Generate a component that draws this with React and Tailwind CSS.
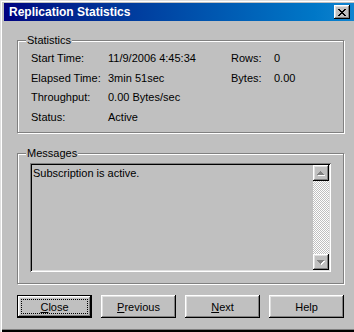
const raised =
  "shadow-[inset_-1px_-1px_0_#000,inset_1px_1px_0_#fff,inset_-2px_-2px_0_#808080,inset_2px_2px_0_#dfdfdf]";

function GroupBox({ label, className, children }) {
  return (
    <div
      className={`relative border border-[#808080] shadow-[inset_1px_1px_0_#fff,1px_1px_0_#fff] ${className}`}
    >
      <span className="absolute left-[8px] top-[-8px] bg-[#c0c0c0] px-[1px] leading-[14px]">
        {label}
      </span>
      {children}
    </div>
  );
}

function Arrow({ down }) {
  const rows = down ? [7, 5, 3, 1] : [1, 3, 5, 7];
  return (
    <svg width="8" height="5" viewBox="0 0 8 5" shapeRendering="crispEdges">
      {rows.map((w, i) => (
        <rect key={"w" + i} x={(7 - w) / 2 + 1} y={i + 1} width={w} height="1" fill="#fff" />
      ))}
      {rows.map((w, i) => (
        <rect key={"g" + i} x={(7 - w) / 2} y={i} width={w} height="1" fill="#808080" />
      ))}
    </svg>
  );
}

function ScrollButton({ down }) {
  return (
    <div className={`h-[16px] w-[16px] bg-[#c0c0c0] flex items-center justify-center ${raised}`}>
      <Arrow down={down} />
    </div>
  );
}

function Button({ children, isDefault }) {
  if (isDefault) {
    return (
      <div className="w-[75px] h-[23px] border border-black">
        <div className={`h-full w-full bg-[#c0c0c0] flex items-center justify-center p-[3px] ${raised}`}>
          <div className="h-full w-full border border-dotted border-black flex items-center justify-center">
            {children}
          </div>
        </div>
      </div>
    );
  }
  return (
    <div className={`w-[75px] h-[23px] bg-[#c0c0c0] flex items-center justify-center ${raised}`}>
      {children}
    </div>
  );
}

const stats = [
  ["Start Time:", "11/9/2006 4:45:34", "Rows:", "0"],
  ["Elapsed Time:", "3min 51sec", "Bytes:", "0.00"],
  ["Throughput:", "0.00 Bytes/sec", "", ""],
  ["Status:", "Active", "", ""],
];

export default function App() {
  return (
    <div
      className="w-[354px] h-[332px] bg-[#c0c0c0] overflow-hidden pl-[4px] pt-[3px] text-[11px] leading-[14px] text-black font-['Liberation_Sans',Arial,sans-serif] shadow-[inset_1px_1px_0_#dfdfdf,inset_2px_2px_0_#fff,inset_0_-1px_0_#000,inset_0_-2px_0_#000,inset_0_-3px_0_#808080] flex flex-col"
    >
      {/* Title bar */}
      <div className="h-[18px] flex items-center justify-between bg-gradient-to-r from-[#000080] to-[#1084d0] pl-[5px] pr-[4px]">
        <span className="text-white font-bold text-[12px]">Replication Statistics</span>
        <div className={`w-[16px] h-[14px] bg-[#c0c0c0] flex items-center justify-center ${raised}`}>
          <svg width="8" height="7" viewBox="0 0 8 7" shapeRendering="crispEdges">
            <path d="M0 0h2v1h-2zM6 0h2v1h-2zM1 1h2v1h-2zM5 1h2v1h-2zM2 2h4v1h-4zM3 3h2v1h-2zM2 4h4v1h-4zM1 5h2v1h-2zM5 5h2v1h-2zM0 6h2v1h-2zM6 6h2v1h-2z" fill="#000" />
          </svg>
        </div>
      </div>

      <div className="pl-[13px] flex flex-col">
        {/* Statistics */}
        <GroupBox label="Statistics" className="mt-[19px] w-[327px] h-[93px]">
          <div className="pl-[13px] pt-[10px] grid grid-cols-[77px_123px_43px_1fr] auto-rows-[19.7px]">
            {stats.map((r, i) => (
              <div key={i} className="contents">
                <span>{r[0]}</span>
                <span>{r[1]}</span>
                <span>{r[2]}</span>
                <span>{r[3]}</span>
              </div>
            ))}
          </div>
        </GroupBox>

        {/* Messages */}
        <GroupBox label="Messages" className="mt-[20px] w-[327px] h-[131px]">
          <div className="ml-[12px] mt-[9px] w-[301px] h-[109px] p-[2px] flex shadow-[inset_1px_1px_0_#808080,inset_-1px_-1px_0_#fff,inset_2px_2px_0_#000,inset_-2px_-2px_0_#dfdfdf]">
            <div className="flex-1 pl-[1px] pt-[1px]">Subscription is active.</div>
            <div className="w-[16px] flex flex-col">
              <ScrollButton />
              <div className="flex-1 bg-[repeating-conic-gradient(#fff_0_25%,#c0c0c0_0_50%)] bg-[length:2px_2px]" />
              <ScrollButton down />
            </div>
          </div>
        </GroupBox>

        {/* Buttons */}
        <div className="mt-[11px] flex gap-[9px]">
          <Button isDefault>
            <span><u>C</u>lose</span>
          </Button>
          <Button>
            <span><u>P</u>revious</span>
          </Button>
          <Button>
            <span><u>N</u>ext</span>
          </Button>
          <Button>
            <span>Help</span>
          </Button>
        </div>
      </div>
    </div>
  );
}
